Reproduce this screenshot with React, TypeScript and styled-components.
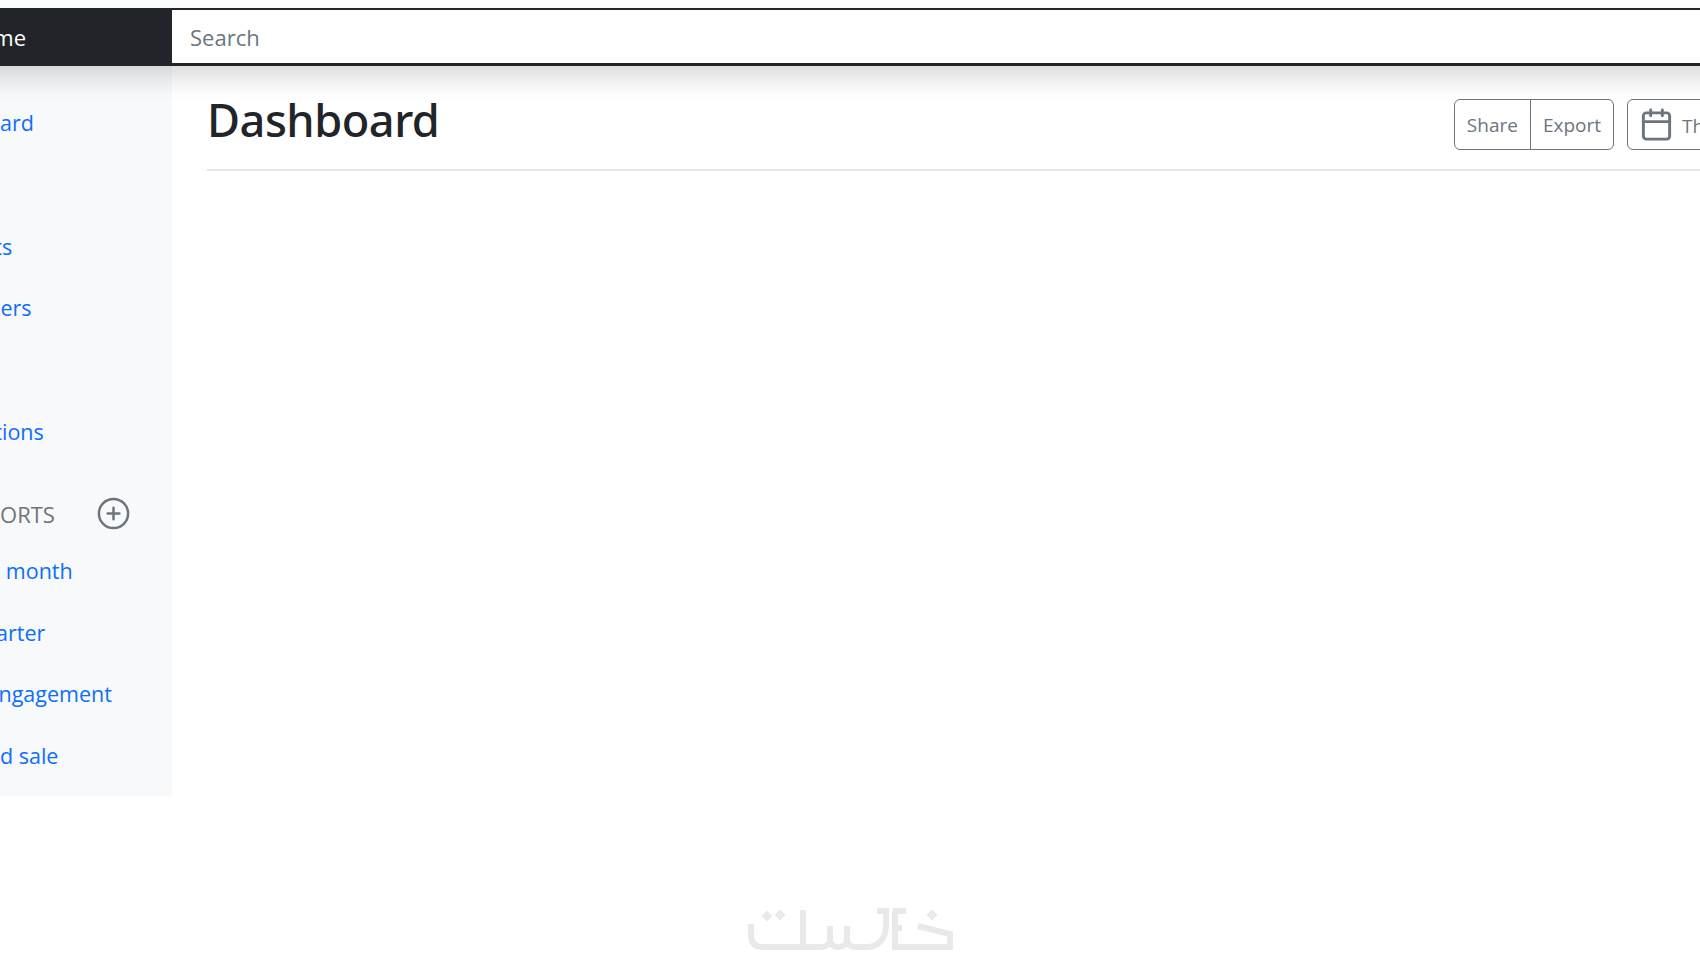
import React from 'react'
import styled, { createGlobalStyle } from 'styled-components'
import { Calendar, CirclePlus } from 'lucide-react'

const GlobalStyle = createGlobalStyle`
  html, body {
    margin: 0;
    padding: 0;
    background: #fff;
    overflow: hidden;
  }
  body {
    font-family: "Open Sans", "Noto Sans", sans-serif;
  }
`

const Viewport = styled.div`
  position: relative;
  width: 1700px;
  height: 970px;
  overflow: hidden;
  padding-top: 8px;
  box-sizing: border-box;
`

const Navbar = styled.header`
  position: relative;
  z-index: 2;
  display: flex;
  height: 58px;
  margin-left: -180px;
  width: 2100px;
  background: #212529;
  box-shadow: 0 12px 24px rgba(0, 0, 0, 0.15);
`

const Brand = styled.div`
  display: flex;
  align-items: center;
  justify-content: flex-end;
  width: 352px;
  box-sizing: border-box;
  padding-right: 146px;
  color: #fff;
  font-size: 22px;
  white-space: nowrap;
`

const SearchBox = styled.input`
  flex: 1;
  margin: 2px 0 3px;
  padding: 1px 18px 0;
  border: 0;
  outline: 0;
  background: #fff;
  font: inherit;
  font-size: 22px;
  &::placeholder {
    color: #6c757d;
    opacity: 1;
  }
`

const Columns = styled.div`
  display: flex;
  margin-left: -180px;
  width: 1997px;
`

const Sidebar = styled.aside`
  flex: none;
  width: 352px;
  height: 730px;
  background: #f8f9fa;
  box-sizing: border-box;
  padding-top: 26px;
`

const NavLink = styled.a<{ $inset?: number }>`
  display: block;
  height: 61.8px;
  line-height: 61.8px;
  padding-left: ${(p) => p.$inset ?? 103}px;
  color: #0d6efd;
  font-size: 21.5px;
  white-space: nowrap;
`

const SectionHead = styled.div`
  display: flex;
  align-items: center;
  justify-content: space-between;
  height: 52px;
  margin-top: 25px;
  padding: 0 41px 0 68px;
  color: #6c757d;
  font-size: 22px;
  text-transform: uppercase;
`

const PlusIcon = styled(CirclePlus)`
  width: 35px;
  height: 35px;
  color: #6c757d;
  stroke-width: 1.7;
`

const Main = styled.main`
  flex: 1;
  padding: 0 0 0 35px;
`

const HeaderRow = styled.div`
  display: flex;
  align-items: center;
  justify-content: space-between;
  height: 103px;
  border-bottom: 2px solid #e4e6e9;
`

const Title = styled.h1`
  margin: 3px 0 0;
  color: #212529;
  font-family: "Noto Sans", "Open Sans", sans-serif;
  font-size: 45.2px;
  font-weight: 500;
  letter-spacing: -0.5px;
`

const Actions = styled.div`
  display: flex;
  align-items: center;
  gap: 13px;
  margin: 13px 0 0;
`

const BtnGroup = styled.div`
  display: flex;
  height: 51px;
  border: 1.5px solid #6c757d;
  border-radius: 6px;
  box-sizing: border-box;
`

const GroupButton = styled.button`
  padding: 1px 12px 0;
  border: 0;
  background: transparent;
  color: #6c757d;
  font: inherit;
  font-size: 19px;
  & + & {
    border-left: 1.5px solid #6c757d;
  }
`

const WeekButton = styled(GroupButton)`
  display: flex;
  align-items: center;
  gap: 8px;
  border: 1.5px solid #6c757d;
  border-radius: 6px;
  height: 51px;
  padding: 0 11px;
  width: 190px;
`

const WeekLabel = styled.span`
  margin-top: 4px;
  white-space: nowrap;
`

const Watermark = styled.svg`
  position: absolute;
  left: 745px;
  top: 900px;
  width: 215px;
  height: 60px;
  color: #e9e9e9;
`

export default function App() {
  return (
    <>
      <GlobalStyle />
      <Viewport>
        <Navbar>
          <Brand>Company name</Brand>
          <SearchBox placeholder="Search" />
        </Navbar>
        <Columns>
          <Sidebar>
            <NavLink>Dashboard</NavLink>
            <NavLink>Orders</NavLink>
            <NavLink>Products</NavLink>
            <NavLink>Customers</NavLink>
            <NavLink $inset={97}>Reports</NavLink>
            <NavLink>Integrations</NavLink>
            <SectionHead>
              Saved reports
              <PlusIcon />
            </SectionHead>
            <NavLink>Current month</NavLink>
            <NavLink>Last quarter</NavLink>
            <NavLink>Social engagement</NavLink>
            <NavLink>Year-end sale</NavLink>
          </Sidebar>
          <Main>
            <HeaderRow>
              <Title>Dashboard</Title>
              <Actions>
                <BtnGroup>
                  <GroupButton>Share</GroupButton>
                  <GroupButton>Export</GroupButton>
                </BtnGroup>
                <WeekButton>
                  <Calendar size={35} strokeWidth={2} />
                  <WeekLabel>This week</WeekLabel>
                </WeekButton>
              </Actions>
            </HeaderRow>
          </Main>
        </Columns>
        <Watermark viewBox="0 0 215 60" fill="none" stroke="currentColor" strokeWidth="6">
          <path d="M6 24v11c0 8 4 12 12 12h40" />
          <path d="M58 10v37" />
          <path d="M58 47h18c5 0 9-3 9-8v-13" />
          <path d="M85 39c0 5 3 8 8 8s9-3 9-8v-13" />
          <path d="M102 39c0 5 3 8 8 8h12c12 0 19-9 19-22V11h-9" />
          <path d="M148 11h13M148 28h9M150 11v36h55v-13l-32-8" />
          <path d="M22 10.5l5.5 5.5-5.5 5.5-5.5-5.5zM35 9.5l5.5 5.5-5.5 5.5-5.5-5.5zM187 9.5l5.5 5.5-5.5 5.5-5.5-5.5z" fill="currentColor" stroke="none" />
        </Watermark>
      </Viewport>
    </>
  )
}
